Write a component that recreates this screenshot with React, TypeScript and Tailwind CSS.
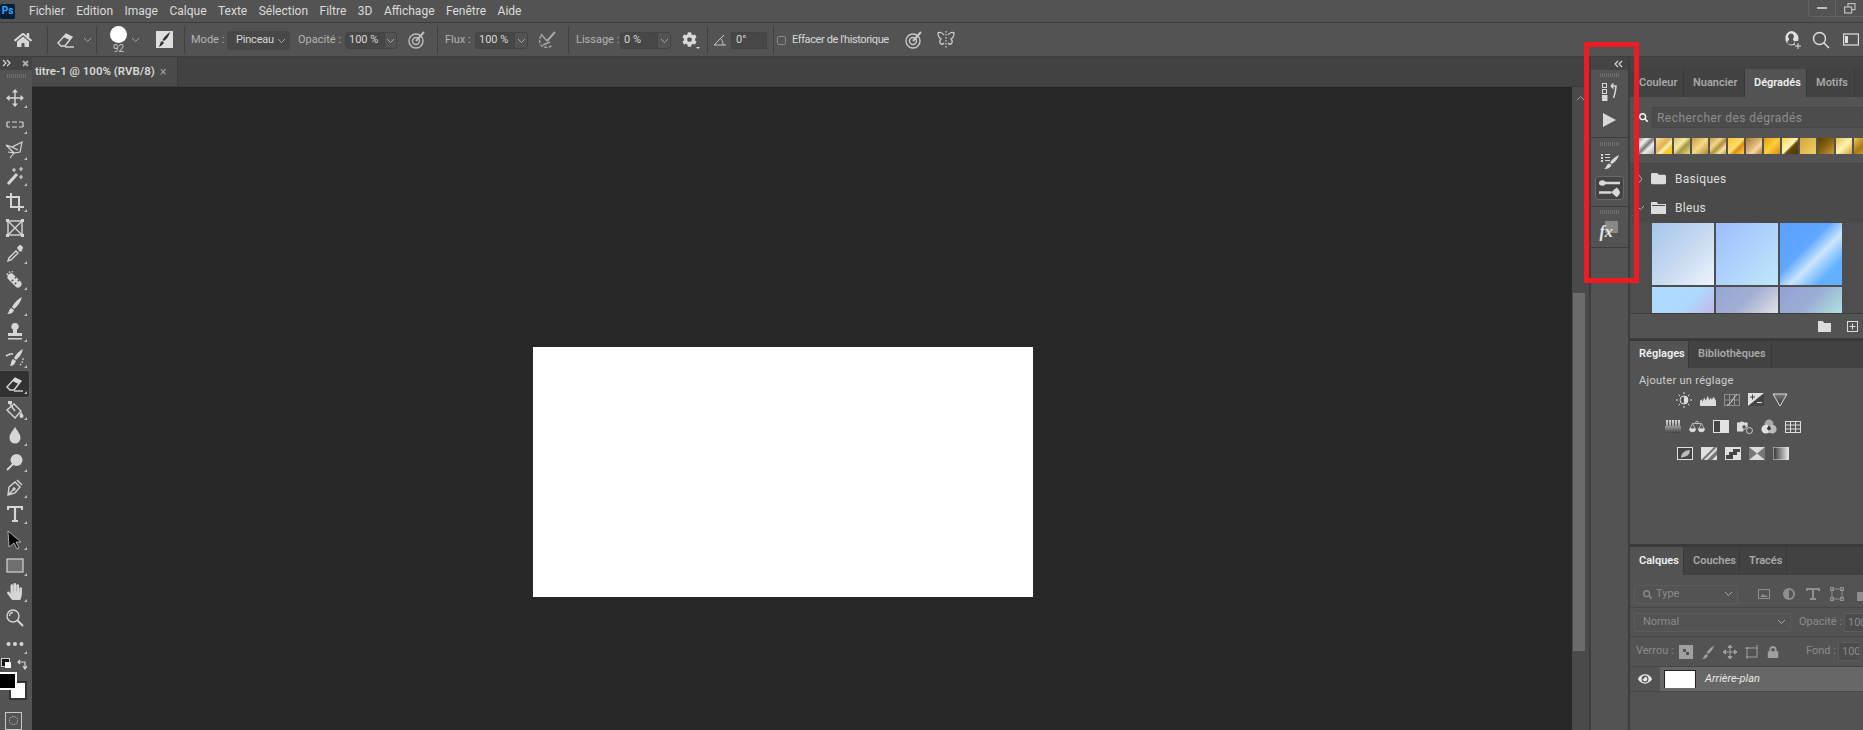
import type { ReactNode } from 'react';
import { FaCog, FaEye, FaFolder, FaHandPaper, FaHome, FaLock, FaSearch } from 'react-icons/fa';

const menus = ['Fichier', 'Edition', 'Image', 'Calque', 'Texte', 'Sélection', 'Filtre', '3D', 'Affichage', 'Fenêtre', 'Aide'];

const Svg = ({ size = 20, box = 20, children }: { size?: number; box?: number; children: ReactNode }) => (
  <svg width={size} height={size} viewBox={`0 0 ${box} ${box}`} fill="none" stroke="currentColor" strokeWidth={1.4}>
    {children}
  </svg>
);

const F = 'currentColor';

const tools: { name: string; icon: ReactNode; corner?: boolean; active?: boolean }[] = [
  { name: 'move', corner: true, icon: <Svg><path d="M10 3v14M3 10h14" /><path fill={F} stroke="none" d="M10 1l3 3.500H7zM10 19l-3-3.500h6zM1 10l3.500-3v6zM19 10l-3.500 3v-6z" /></Svg> },
  { name: 'marquee', corner: true, icon: <Svg><path strokeWidth={1.200} d="M2 8h3M7 8h5M14 8h4M2 13h3M7 13h5M14 13h4M2 8v5M18 8v5" /></Svg> },
  { name: 'lasso', corner: true, icon: <Svg><path strokeWidth={1.200} d="M1 5l6 2 10-5-2 10-6 1zM7 7l6 3M9 13l-4 5M9 13l-6-1" /></Svg> },
  { name: 'wand', corner: true, icon: <Svg><path strokeWidth={3} d="M3 18L12 8" /><path strokeWidth={1.200} d="M9 2v4M7 4h4M16 1v4M14 3h4M16 9v4M14 11h4" /></Svg> },
  { name: 'crop', corner: true, icon: <Svg><path strokeWidth={2} d="M6 1v14h13M1 5h13v14" /></Svg> },
  { name: 'frame', icon: <Svg><rect x="3" y="3" width="14" height="14" /><path d="M3 3l14 14M17 3L3 17" /><path fill={F} stroke="none" d="M1 1h3v3H1zM16 1h3v3h-3zM1 16h3v3H1zM16 16h3v3h-3z" /></Svg> },
  { name: 'dropper', corner: true, icon: <Svg><path d="M3 17l1-3 7-7 2 2-7 7zM13 3l4 4" /><path fill={F} stroke="none" d="M12 4l2-2.500c1-.8 2-.5 3 .5s1.300 2 .5 3L15 8z" /></Svg> },
  { name: 'heal', corner: true, icon: <Svg><path fill={F} stroke="none" d="M8 4l8 8c1 1 1 3-.5 4.500S12 18 11 17l-8-8C2 8 2 6 3.500 4.500S7 3 8 4z" /><path stroke="#535353" strokeWidth={2} d="M7 10l1 1M10 7l1 1M10 13l1 1M13 10l1 1" /><path strokeDasharray="1.500 1.500" d="M2 5c1-3 4-4 6-3" /></Svg> },
  { name: 'brush', corner: true, icon: <Svg><path fill={F} stroke="none" d="M17 1c-1 4-4 9-8 12l-2-2c2-4 6-8 10-10zM6 12l3 2c-1 3-3 4-7 4 2-1 2-5 4-6z" /></Svg> },
  { name: 'stamp', corner: true, icon: <Svg><path fill={F} stroke="none" d="M10 1a3.500 3.500 0 0 1 2 6.500V11h5v3H3v-3h5V7.500A3.500 3.500 0 0 1 10 1zM3 16h14v1.500H3z" /></Svg> },
  { name: 'history', corner: true, icon: <Svg><path fill={F} stroke="none" d="M18 1c-1 4-3 8-7 11l-2-2c2-4 5-7 9-9zM8 11l3 2c-1 3-3 5-6 5 1-1 1-6 3-7z" /><path d="M1 8l4-2h3" /><path strokeDasharray="1.500 1.500" d="M15 17c2-2 3-4 3-7" /></Svg> },
  { name: 'eraser', corner: true, active: true, icon: <Svg><path d="M2 13l8-9 6 3-7 9H5z" /><path fill={F} stroke="none" d="M7.500 7l2.500-3 6 3-2.500 3z" /><path d="M9 17h9" /></Svg> },
  { name: 'bucket', corner: true, icon: <Svg><path d="M2 10l7-6 7 7-6 7zM5 4l5 7" /><path fill={F} stroke="none" d="M16 12c1.500 2 2.500 3 2.500 4a2 2 0 0 1-4 0c0-1 .5-2 1.500-4zM3 1h4v3H3z" /></Svg> },
  { name: 'blur', corner: true, icon: <Svg><path fill={F} stroke="none" d="M10 1c3 5 5.500 7 5.500 11a5.500 5.500 0 0 1-11 0c0-4 2.500-6 5.500-11z" /></Svg> },
  { name: 'dodge', corner: true, icon: <Svg><circle cx="11.500" cy="8" r="6" fill={F} stroke="none" /><path strokeWidth={1.800} d="M8 12l-6 6" /></Svg> },
  { name: 'pen', corner: true, icon: <Svg><path d="M3 17l1-8 6-5 5 5-5 6zM3 17l5-5M12 2l5 5" /><circle cx="9" cy="11" r="1" /></Svg> },
  { name: 'type', corner: true, icon: <Svg><path strokeWidth={2.200} d="M10 3v14M7 17h6" /><path strokeWidth={2} d="M3 6V3h14v3" /></Svg> },
  { name: 'path', corner: true, icon: <svg width="20" height="20" viewBox="0 0 20 20" fill="#000" stroke="#ccc" strokeWidth={0.8}><path d="M3 1l13 11h-5l3 6-2 1-3-6-5 4z" /></svg> },
  { name: 'rect', corner: true, icon: <svg width="20" height="20" viewBox="0 0 20 20"><rect x="2" y="3" width="16" height="13" fill="#6f6f6f" stroke="#d4d4d4" strokeWidth={1.200} /></svg> },
  { name: 'hand', corner: true, icon: <FaHandPaper size={17} /> },
  { name: 'zoom', icon: <Svg><circle cx="8" cy="8" r="6" /><path d="M4.500 8a3.500 3.500 0 0 1 3.500-3.500" /><path strokeWidth={2} d="M12.500 12.500L18 18" /></Svg> },
  { name: 'more', corner: true, icon: <Svg><circle cx="3.500" cy="10" r="2" fill={F} stroke="none" /><circle cx="10" cy="10" r="2" fill={F} stroke="none" /><circle cx="16.500" cy="10" r="2" fill={F} stroke="none" /></Svg> },
];

const Sep = () => <div className="h-[28px] w-px shrink-0 bg-[#414141]" />;

const Chevron = ({ className = '' }: { className?: string }) => (
  <svg width="9" height="6" viewBox="0 0 9 6" fill="none" stroke="#b0b0b0" strokeWidth={0.9} className={className}>
    <path d="M1 1l3.500 3.500L8 1" />
  </svg>
);

const DoubleArrow = ({ left }: { left?: boolean }) => (
  <svg width="9" height="8" viewBox="0 0 9 8" fill="none" stroke="#d8d8d8" strokeWidth={1.200}>
    <path d={left ? 'M4 1L1 4l3 3M8 1L5 4l3 3' : 'M1 1l3 3-3 3M5 1l3 3-3 3'} />
  </svg>
);

const Label = ({ w, ml, children }: { w: number; ml: string; children: ReactNode }) => (
  <span style={{ width: w }} className={`${ml} mt-[2px] shrink-0 whitespace-nowrap text-[11px] text-[#b4b4b4]`}>
    {children}
  </span>
);

const NumberBox = ({ value, w, arrowAt, ml }: { value: string; w: string; arrowAt: string; ml: string }) => (
  <div className={`${ml} ${w} flex h-[17px] shrink-0 rounded-[3px] border border-[#444] text-[11px] text-[#d8d8d8]`}>
    <span className={`${arrowAt} flex items-center bg-[#474747] pl-[3px]`}>{value}</span>
    <span className="flex flex-1 items-center justify-center border-l border-[#444]">
      <Chevron />
    </span>
  </div>
);

const Target = () => (
  <Svg>
    <circle cx="9" cy="11" r="7" />
    <circle cx="9" cy="11" r="3.500" />
    <path strokeWidth={2} d="M9 11l8-9" />
  </Svg>
);

const OptionsBar = () => (
  <div className="flex h-[33px] shrink-0 items-center bg-[#535353] text-[#d8d8d8]">
    <div className="flex w-[47px] justify-center pr-[2px]">
      <FaHome size={18} />
    </div>
    <Sep />
    <div className="flex w-[48px] items-center pl-[8px]">
      <Svg size={20}>
        <path d="M2 13l8-9 6 3-7 9H5z" />
        <path fill={F} stroke="none" d="M7.500 7l2.500-3 6 3-2.500 3z" />
        <path d="M9 17h9" />
      </Svg>
      <Chevron className="ml-[7px]" />
    </div>
    <Sep />
    <div className="flex w-[59px] items-start pl-[13px]">
      <div className="flex w-[17px] flex-col items-center">
        <div className="mt-[1px] size-[17px] rounded-full bg-white blur-[0.5px]" />
        <span className="text-[10px] leading-[11px] text-[#c8c8c8]">92</span>
      </div>
      <Chevron className="mt-[12px] ml-[4px]" />
    </div>
    <div className="flex h-[17px] w-[17px] shrink-0 items-center justify-center bg-[#dedede] text-[#333]">
      <svg width="13" height="15" viewBox="0 0 13 15" fill="currentColor"><path d="M12 0c-1 4-3 7-6 9L4.500 8C6 5 9 2 12 0zM4 9l2 1.500C5 13 3 14 1 15c1-2 1-5 3-6z" /></svg>
    </div>
    <div className="ml-[11px]">
      <Sep />
    </div>
    <Label w={29} ml="ml-[6px]">Mode :</Label>
    <div className="mt-[2px] ml-[7px] flex h-[19px] w-[63px] shrink-0 items-center justify-between rounded-[3px] border border-[#484848] bg-[#474747] pr-[3px] pl-[8px] text-[11px] tracking-[-0.2px] text-[#d8d8d8]">
      Pinceau
      <Chevron />
    </div>
    <Label w={40} ml="ml-[8px]">Opacité :</Label>
    <NumberBox value="100 %" w="w-[52px]" arrowAt="w-[38px]" ml="ml-[7px] mt-[2px]" />
    <div className="flex w-[40px] justify-center text-[#bdbdbd]">
      <Target />
    </div>
    <Sep />
    <Label w={24} ml="ml-[7px]">Flux :</Label>
    <NumberBox value="100 %" w="w-[53px]" arrowAt="w-[38px]" ml="ml-[6px] mt-[2px]" />
    <div className="flex w-[40px] justify-center text-[#a8a8a8]">
      <Svg>
        <path strokeDasharray="3 1.500" d="M3 6c-2 3-2 8 1 10s8 2 10-1" />
        <path d="M3 4l6 7M5 15l7-3" />
        <path strokeWidth={2} d="M9 11l8-9" />
      </Svg>
    </div>
    <Sep />
    <Label w={39} ml="ml-[7px]">Lissage :</Label>
    <NumberBox value="0 %" w="w-[51px]" arrowAt="w-[36px]" ml="ml-[5px] mt-[2px]" />
    <div className="relative flex w-[36px] justify-center">
      <FaCog size={15} />
      <div className="absolute right-[7px] bottom-[-2px] h-0 w-0 border-x-[2px] border-t-[2px] border-x-transparent border-t-[#e0e0e0]" />
    </div>
    <Sep />
    <div className="flex w-[23px] justify-center text-[#c8c8c8]">
      <svg width="14" height="12" viewBox="0 0 14 12" fill="none" stroke="currentColor" strokeWidth={1}><path d="M13 11H1L11 1M8 5c1.500 1.500 2 3.500 2 6" /></svg>
    </div>
    <div className="mt-[2px] flex h-[17px] w-[36px] shrink-0 items-center border border-[#444] bg-[#474747] pl-[4px] text-[11px] text-[#d8d8d8]">0°</div>
    <div className="ml-[6px]">
      <Sep />
    </div>
    <div className="mt-[2px] ml-[3px] size-[9px] shrink-0 rounded-[2px] border border-[#8a8a8a]" />
    <span className="mt-[2px] ml-[6px] w-[96px] shrink-0 text-[11px] tracking-[-0.4px] whitespace-nowrap text-[#d8d8d8]">Effacer de l'historique</span>
    <div className="ml-[14px] flex w-[24px] justify-center text-[#c8c8c8]">
      <Target />
    </div>
    <div className="ml-[8px] flex w-[24px] justify-center text-[#d0d0d0]">
      <svg width="18" height="20" viewBox="0 0 18 20" fill="none" stroke="currentColor" strokeWidth={1.200}>
        <path d="M9 1v18" strokeDasharray="1.500 1.500" />
        <path d="M7 5C5 2 2 2 1 3c0 3 1 5 3 6-1 1-2 3 0 5 1 1 2 0 3-1M11 5c2-3 5-3 6-2 0 3-1 5-3 6 1 1 2 3 0 5-1 1-2 0-3-1" />
      </svg>
    </div>
    <div className="ml-auto flex items-center gap-[13px] pr-[4px] text-[#e0e0e0]">
      <svg className="mr-[-5px]" width="22" height="20" viewBox="0 0 22 20" fill="currentColor">
        <path d="M9 1a7.500 7.500 0 0 1 7.500 7.500c0 1-.2 1.800-.5 2.500h-3v4h-1.500c-.8.300-1.600.5-2.500.5A7.500 7.500 0 0 1 9 1z" />
        <path fill="#535353" d="M9 3.500a3 3 0 0 1 2 5.200V10l1.500 1v2.500a7 7 0 0 1-7 0V11L7 10V8.700a3 3 0 0 1 2-5.200z" />
        <path stroke="currentColor" fill="none" d="M16 13v6M13 16h6" />
      </svg>
      <svg width="18" height="18" viewBox="0 0 18 18" fill="none" stroke="currentColor" strokeWidth={1.400}>
        <circle cx="7.500" cy="7.500" r="6" />
        <path d="M12 12l5 5" />
      </svg>
      <svg width="16" height="14" viewBox="0 0 16 14" fill="none" stroke="currentColor" strokeWidth={1.200}>
        <rect x="0.600" y="1" width="14.800" height="11" />
        <rect x="2" y="3" width="3" height="7" fill="currentColor" stroke="none" />
      </svg>
    </div>
  </div>
);

const Grip = ({ className = '' }: { className?: string }) => (
  <div className={`h-[4px] w-[19px] bg-[repeating-linear-gradient(90deg,#6f6f6f_0,#6f6f6f_1px,transparent_1px,transparent_2px)] ${className}`} />
);

const Toolbar = () => (
  <div className="flex w-[32px] shrink-0 flex-col bg-[#535353] text-[#d6d6d6]">
    <div className="flex h-[13px] items-center justify-between bg-[#444] pr-[3px] pl-[2px]">
      <DoubleArrow />
      <svg width="7" height="7" viewBox="0 0 7 7" stroke="#b0b0b0" strokeWidth={1.800}><path d="M1 1l5 5M6 1L1 6" /></svg>
    </div>
    <Grip className="mx-auto mt-[4px] mb-[7px] shrink-0" />
    {tools.map((t) => (
      <div key={t.name} className={`relative flex h-[26px] w-[29px] shrink-0 items-center justify-center rounded-r-[2px] ${t.active ? 'bg-[#323232] shadow-[0_0_0_1px_#5e5e5e]' : ''}`}>
        {t.icon}
        {t.corner && <div className="absolute right-[2px] bottom-[3px] h-0 w-0 border-b-[3px] border-l-[3px] border-b-[#c0c0c0] border-l-transparent" />}
      </div>
    ))}
    <div className="relative mt-[1px] h-[74px] w-full">
      <div className="flex h-[10px] items-start pl-[1px]">
        <div className="relative size-[9px] border border-[#ccc] bg-[#111]">
          <div className="absolute top-[3px] left-[3px] size-[6px] bg-white" />
        </div>
        <svg className="ml-[7px]" width="12" height="12" viewBox="0 0 12 12" fill="none" stroke="#d8d8d8" strokeWidth={1.200}><path d="M1 4h7v6M3 2L1 4l2 2M6 8l2 3 2-3" /></svg>
      </div>
      <div className="absolute top-[23px] left-[9px] h-[19px] w-[18px] border-2 border-[#333] bg-white" />
      <div className="absolute top-[14px] left-0 h-[18px] w-[17px] border-y-2 border-r-2 border-white bg-black" />
      <div className="absolute top-[54px] left-[5px] h-[18px] w-[17px] border border-[#c8c8c8]">
        <div className="mx-auto mt-[3px] size-[9px] rounded-full border border-dotted border-[#c8c8c8]" />
      </div>
    </div>
  </div>
);

const DocTabs = () => (
  <div className="flex h-[29px] shrink-0 bg-[#424242]">
    <div className="flex w-[146px] items-center border-r border-[#3b3b3b] bg-[#4b4b4b] pl-[3px] text-[11.5px] font-semibold whitespace-nowrap text-[#d8d8d8]">
      <span className="w-[125px]">titre-1 @ 100% (RVB/8)</span>
      <span className="text-[12px] font-normal text-[#a0a0a0]">×</span>
    </div>
  </div>
);

const Dock = () => (
  <div className="flex w-[41px] shrink-0 flex-col border-x-2 border-x-[#3d3d3d] bg-[#535353] text-[#d8d8d8]">
    <div className="flex h-[13px] items-center justify-end bg-[#444] pr-[5px]">
      <DoubleArrow left />
    </div>
    <div className="flex h-[68px] flex-col items-center border-b border-[#3d3d3d] pt-[3px]">
      <Grip />
      <svg className="mt-[6px]" width="16" height="18" viewBox="0 0 16 18" fill="none" stroke="currentColor"><rect x="0.500" y="0.500" width="4" height="4" /><rect x="0.500" y="6.500" width="4" height="4" /><rect x="0" y="12.500" width="5" height="5" fill="currentColor" /><path strokeWidth={1.500} d="M10 3h4c-.5 5-.5 7-2.500 12M9 3l2.500-2.500M9 3l2.500 2.500" /></svg>
      <svg className="mt-[11px]" width="15" height="16" viewBox="0 0 15 16" fill="currentColor"><path d="M1 1l13 7-13 7z" /></svg>
    </div>
    <div className="flex h-[69px] flex-col items-center border-b border-[#3d3d3d] pt-[4px]">
      <Grip />
      <svg className="mt-[7px]" width="20" height="17" viewBox="0 0 20 17" fill="currentColor"><path d="M1 1h2v2H1zM5 1h5v1H5zM1 4h2v2H1zM5 4h5v1H5zM1 7h2v2H1zM5 7h5v1H5zM19 2c-1 4-4 7-7 9l-2-1.500c2-3 5-6 9-7.500zM9 10.500l2.500 1.500c-1 2.500-3 4-7.500 4 2.500-1 2.500-5 5-5.500z" /></svg>
      <div className="mt-[6px] flex h-[24px] w-[29px] items-center justify-center rounded-[3px] border border-[#6a6a6a] bg-[#444]">
        <svg width="21" height="17" viewBox="0 0 19 15" fill="currentColor"><path d="M3 1.500h16v2.200H3zM0 2.500a3 2.500 0 1 1 6 0 3 2.500 0 0 1-6 0zM0 10h11v2.200H0zM11 11l5-4.500c2 2 3 3.500 3 4.500s-1 2.500-3 4.500z" /></svg>
      </div>
    </div>
    <div className="flex h-[41px] flex-col items-center border-b border-[#3d3d3d] pt-[3px]">
      <Grip />
      <div className="relative mt-[7px] h-[18px] w-[16px]">
        <div className="absolute top-0 right-0 h-[12px] w-[13px] bg-[#888]" />
        <span className="absolute bottom-[-1px] left-[-2px] font-['Liberation_Serif',serif] text-[16px] leading-none font-bold text-[#e8e8e8] italic">fx</span>
      </div>
    </div>
  </div>
);

const PanelTab = ({ w, active, children }: { w: string; active?: boolean; children: ReactNode }) => (
  <div className={`${w} flex shrink-0 items-center border-r border-[#3a3a3a] pl-[9px] text-[11px] font-semibold whitespace-nowrap ${active ? 'bg-[#535353] text-[#f0f0f0]' : 'text-[#a8a8a8]'}`}>
    {children}
  </div>
);

const PanelTabs = ({ h, children }: { h: string; children: ReactNode }) => <div className={`${h} flex shrink-0 bg-[#424242]`}>{children}</div>;

const swatches = [
  'bg-[linear-gradient(135deg,#8a8a8a_0%,#f2f2f2_30%,#777_50%,#eee_65%,#aaa_100%)]',
  'bg-[linear-gradient(135deg,#f9e29b_0%,#e2b250_45%,#fff0be_60%,#ffc629_75%)]',
  'bg-[linear-gradient(135deg,#dcc66a_0%,#f4e9a4_40%,#a89340_60%,#e8dc8c_100%)]',
  'bg-[linear-gradient(135deg,#c89b3e_0%,#f6d989_50%,#b58630_100%)]',
  'bg-[linear-gradient(135deg,#c8a247_0%,#f0d78a_35%,#b48d3a_55%,#f5e2a0_75%,#c8a045_100%)]',
  'bg-[linear-gradient(135deg,#ffc42c_0%,#ffdd6e_50%,#d78f12_65%,#ffd050_100%)]',
  'bg-[linear-gradient(135deg,#aa7a36_0%,#e0b878_50%,#f8d8a0_65%,#b08038_100%)]',
  'bg-[linear-gradient(135deg,#e89d0c_0%,#ffce3c_50%,#d88d10_100%)]',
  'bg-[linear-gradient(135deg,#ffd74a_0%,#fff4b8_50%,#6b4a08_60%,#4a3200_100%)]',
  'bg-[linear-gradient(135deg,#d4a63a_0%,#f2d066_100%)]',
  'bg-[linear-gradient(135deg,#5a3d00_0%,#8a6410_50%,#c49a3a_100%)]',
  'bg-[linear-gradient(135deg,#e8c050_0%,#fff4b0_50%,#d0a030_100%)]',
  'bg-[linear-gradient(135deg,#f0c850_0%,#a87818_50%,#e0b040_100%)]',
];

const blues = [
  'h-[62px] bg-[linear-gradient(135deg,#a5c6ec_0%,#c5d9ef_50%,#edf4ff_100%)]',
  'h-[62px] bg-[linear-gradient(135deg,#9dbdff_0%,#c0e8fb_100%)]',
  'h-[62px] bg-[linear-gradient(135deg,#5aa2ff_0%,#5ea6ff_40%,#cbe6ff_58%,#62b0ff_80%)]',
  'h-[26px] bg-[linear-gradient(135deg,#acdcff_0%,#b0d8fc_60%,#c0b8ea_100%)]',
  'h-[26px] bg-[linear-gradient(135deg,#94a6d2_0%,#a2afd4_50%,#e0e2e4_100%)]',
  'h-[26px] bg-[linear-gradient(135deg,#92a2d4_0%,#9aaed4_50%,#aee2e0_100%)]',
];

const FolderRow = ({ open, label }: { open?: boolean; label: string }) => (
  <div className="flex h-[29px] items-center pl-[7px] text-[12px] tracking-[0.3px] text-[#dedede]">
    <svg width="7" height="10" viewBox="0 0 7 10" fill="none" stroke="#b8b8b8" strokeWidth={0.9}>
      {open ? <path d="M0 3l3.500 3.500L7 3" /> : <path d="M1 0l4 5-4 5" />}
    </svg>
    <div className="ml-[7px] text-[#dcdcdc]">
      {open ? (
        <svg width="15" height="12" viewBox="0 0 15 12" fill="currentColor"><path d="M0 0h6l1 2h8v10H0zM1 3v1h13V3z" fillRule="evenodd" /></svg>
      ) : (
        <FaFolder size={15} />
      )}
    </div>
    <span className="ml-[9px]">{label}</span>
  </div>
);

const GradientsPanel = () => (
  <div className="flex h-[241px] shrink-0 flex-col bg-[#535353]">
    <div className="flex h-[41px] shrink-0 items-start overflow-hidden pt-[10px]">
      <FaSearch size={9} className="mt-[6px] ml-[9px] shrink-0 text-white" />
      <div className="ml-[4px] flex h-[21px] w-[300px] shrink-0 items-center border border-[#474747] bg-[#4c4c4c] pl-[4px] text-[12px] tracking-[0.45px] text-[#8c8c8c]">Rechercher des dégradés</div>
    </div>
    <div className="flex h-[26px] shrink-0 gap-[2px] overflow-hidden border-b border-[#454545] pl-[8px]">
      {swatches.map((s) => (
        <div key={s} className={`h-[16px] w-[16px] shrink-0 ${s}`} />
      ))}
    </div>
    <div className="h-[59px] shrink-0 bg-[#4a4a4a]">
      <FolderRow label="Basiques" />
      <FolderRow open label="Bleus" />
    </div>
    <div className="grid h-[90px] shrink-0 grid-cols-[62px_62px_62px] content-start gap-[2px] overflow-hidden bg-[#4e4e4e] pl-[22px]">
      {blues.map((b) => (
        <div key={b} className={b} />
      ))}
    </div>
    <div className="flex flex-1 items-center justify-end gap-[16px] border-t border-[#3d3d3d] pr-[5px] text-[#dcdcdc]">
      <svg width="13" height="11" viewBox="0 0 13 11" fill="currentColor"><path d="M0 0h5l1 2h7v9H0z" /></svg>
      <svg width="11" height="11" viewBox="0 0 11 11" fill="none" stroke="currentColor"><rect x="0.500" y="0.500" width="10" height="10" /><path d="M5.500 2.500v6M2.500 5.500h6" /></svg>
    </div>
  </div>
);

const AdjIcon = ({ children }: { children: ReactNode }) => (
  <svg width="16" height="16" viewBox="0 0 16 16" fill="none" stroke="#dcdcdc" strokeWidth={1}>
    {children}
  </svg>
);

const adjRows: { pl: string; icons: ReactNode[] }[] = [
  {
    pl: 'pl-[46px]',
    icons: [
      <AdjIcon key="1"><circle cx="8" cy="8" r="4" /><path fill="#dcdcdc" stroke="none" d="M8 4a4 4 0 0 1 0 8z" /><path d="M8 0v2M8 14v2M0 8h2M14 8h2M2.500 2.500L4 4M12 12l1.500 1.500M13.500 2.500L12 4M4 12l-1.500 1.500" /></AdjIcon>,
      <svg key="2" width="19" height="16" viewBox="0 0 19 16" fill="#dcdcdc"><path d="M0 15V9l2-2 1 3 2-5 2 4 2-6 2 5 2-3 1 3 2-4 3 5v6z" /></svg>,
      <AdjIcon key="3"><rect x="0.500" y="2.500" width="15" height="11" stroke="#8f8f8f" /><path stroke="#8f8f8f" d="M5.500 2.500v11M10.500 2.500v11M0.500 8h15" /><path stroke="#dcdcdc" d="M3 13c4 0 6-8 10-10.500" /></AdjIcon>,
      <svg key="4" width="16" height="14" viewBox="0 0 16 14"><rect width="16" height="13" fill="#e0e0e0" /><path fill="#444" d="M16 0v13H0z" /><path stroke="#444" fill="none" d="M2 4h5M4.500 1.500v5" /><path stroke="#e0e0e0" fill="none" d="M9 9.500h5" /></svg>,
      <svg key="5" width="16" height="14" viewBox="0 0 16 14"><defs><linearGradient id="v" x1="0" x2="0" y1="0" y2="1"><stop offset="0" stopColor="#777" /><stop offset="1" stopColor="#333" /></linearGradient></defs><path d="M1 1h14L8 13z" fill="url(#v)" stroke="#dcdcdc" /></svg>,
    ],
  },
  {
    pl: 'pl-[35px]',
    icons: [
      <svg key="1" width="16" height="13" viewBox="0 0 16 13"><defs><linearGradient id="h" x1="0" x2="0" y1="0" y2="1"><stop offset="0" stopColor="#e0e0e0" /><stop offset="1" stopColor="#444" /></linearGradient></defs><rect width="16" height="13" fill="url(#h)" /><path stroke="#555" strokeDasharray="1 2" strokeWidth={6} d="M0 3h16" /></svg>,
      <svg key="2" width="18" height="14" viewBox="0 0 18 14" fill="#dcdcdc" stroke="#dcdcdc" strokeWidth={0.8}><path fill="none" d="M4 3h10M4 3L1 9M4 3l3 6M14 3l-3 6M14 3l3 6" /><path d="M0.500 9h7a3.500 3.500 0 0 1-7 0zM10.500 9h7a3.500 3.500 0 0 1-7 0z" /><circle cx="9" cy="2" r="1.500" fill="none" /></svg>,
      <svg key="3" width="16" height="13" viewBox="0 0 16 13"><rect width="16" height="13" fill="#e2e2e2" /><rect x="1" y="1" width="6" height="11" fill="#444" /></svg>,
      <svg key="4" width="18" height="16" viewBox="0 0 18 16" fill="#dcdcdc"><path d="M0 3h3l1-1h3l1 1h4v5a5 5 0 0 0-5 5H0z" /><circle cx="8" cy="8" r="2.500" fill="#535353" stroke="#dcdcdc" /><circle cx="14" cy="12" r="3.400" fill="none" stroke="#dcdcdc" /></svg>,
      <svg key="5" width="18" height="17" viewBox="0 0 18 17"><circle cx="9" cy="5.500" r="5" fill="#aaa" /><circle cx="5.500" cy="11.500" r="5" fill="#e0e0e0" /><circle cx="12.500" cy="11.500" r="5" fill="#bbb" /><path d="M9 7l2.500 4-2.500 2-2.500-2z" fill="#333" /></svg>,
      <AdjIcon key="6"><rect x="0.500" y="2.500" width="15" height="11" /><path d="M5.500 2.500v11M10.500 2.500v11M0.500 6h15M0.500 10h15" /></AdjIcon>,
    ],
  },
  {
    pl: 'pl-[47px]',
    icons: [
      <svg key="1" width="16" height="13" viewBox="0 0 16 13"><rect width="16" height="13" fill="#e0e0e0" /><rect x="1" y="1" width="14" height="11" fill="#444" /><path d="M4 11c0-5 4-8 9-8 0 5-4 7-7 7z" fill="#bbb" /></svg>,
      <svg key="2" width="16" height="13" viewBox="0 0 16 13"><rect width="16" height="13" fill="#e0e0e0" /><path d="M0 13L13 0h3L3 13zM6 13L16 3v5l-5 5z" fill="#777" /></svg>,
      <svg key="3" width="16" height="13" viewBox="0 0 16 13"><rect width="16" height="13" fill="#e0e0e0" /><path d="M1 12V8h3V5h4V2h7v3h-3v3H8v4z" fill="#444" /></svg>,
      <svg key="4" width="16" height="13" viewBox="0 0 16 13"><rect width="16" height="13" fill="#dcdcdc" /><path d="M0 0l8 6.500L0 13zM16 0L8 6.500l8 6.500z" fill="#777" /></svg>,
      <svg key="5" width="16" height="13" viewBox="0 0 16 13"><defs><linearGradient id="g" x1="0" x2="1" y1="0" y2="0"><stop offset="0" stopColor="#333" /><stop offset="1" stopColor="#eee" /></linearGradient></defs><rect width="16" height="13" fill="url(#g)" stroke="#dcdcdc" /></svg>,
    ],
  },
];

const AdjustPanel = () => (
  <div className="flex h-[176px] shrink-0 flex-col bg-[#535353] pt-[8px]">
    <span className="pl-[9px] text-[11px] leading-[10px] tracking-[0.3px] text-[#cfcfcf]">Ajouter un réglage</span>
    {adjRows.map((r) => (
      <div key={r.pl} className={`${r.pl} flex h-[27px] items-center gap-[8px]`}>
        {r.icons.map((ic, i) => (
          <div key={i} className="flex w-[16px] justify-center">{ic}</div>
        ))}
      </div>
    ))}
  </div>
);

const LayersPanel = () => (
  <div className="flex flex-1 flex-col bg-[#535353] text-[11px]">
    <div className="flex h-[33px] shrink-0 items-center border-b border-[#474747] pt-[6px] pl-[4px] text-[#8b8b8b]">
      <div className="flex h-[19px] w-[104px] shrink-0 items-center justify-between rounded-[2px] border border-[#5c5c5c] pr-[4px] pl-[8px]">
        <span className="flex items-center gap-[4px]"><FaSearch size={9} />Type</span>
        <Chevron />
      </div>
      <div className="ml-[20px] flex items-center gap-[10px] text-[#8f8f8f]">
        <svg width="14" height="11" viewBox="0 0 14 11" fill="none" stroke="currentColor"><rect x="0.500" y="0.500" width="11" height="9" /><path fill="currentColor" stroke="none" d="M2 8l3-3 2 2 1-1 2 2z" /></svg>
        <svg width="14" height="14" viewBox="0 0 14 14"><circle cx="7" cy="7" r="6" fill="#8f8f8f" /><path d="M7 3a4 4 0 0 1 0 8z" fill="#555" /></svg>
        <svg width="14" height="12" viewBox="0 0 14 12" fill="none" stroke="currentColor" strokeWidth={2}><path d="M7 1v10M4 11h6M1 3V1h12v2" /></svg>
        <svg width="14" height="14" viewBox="0 0 14 14" fill="none" stroke="currentColor"><rect x="2" y="2" width="10" height="10" /><rect x="0.500" y="0.500" width="3" height="3" /><rect x="10.500" y="0.500" width="3" height="3" /><rect x="0.500" y="10.500" width="3" height="3" /><rect x="10.500" y="10.500" width="3" height="3" /></svg>
        <svg width="14" height="14" viewBox="0 0 14 14" fill="currentColor"><path d="M3 5h11v9H3z" /></svg>
      </div>
    </div>
    <div className="flex h-[29px] shrink-0 items-center border-b border-[#474747] pl-[4px] text-[#8b8b8b]">
      <div className="flex h-[19px] w-[157px] shrink-0 items-center justify-between rounded-[2px] border border-[#5c5c5c] pr-[4px] pl-[8px]">
        Normal
        <Chevron />
      </div>
      <span className="ml-[8px] w-[40px] shrink-0 whitespace-nowrap">Opacité :</span>
      <div className="ml-[5px] h-[19px] w-[24px] shrink-0 overflow-hidden border-y border-l border-[#5c5c5c] bg-[#4c4c4c] pl-[3px] leading-[17px]">100</div>
    </div>
    <div className="flex h-[29px] shrink-0 items-center pl-[6px] text-[#8b8b8b]">
      <span className="w-[41px] shrink-0">Verrou :</span>
      <div className="ml-[2px] flex items-center gap-[8px] text-[#a0a0a0]">
        <svg width="14" height="14" viewBox="0 0 14 14" fill="currentColor"><path d="M0 0h14v14H0zM4 4v3h3V4zm3 3v3h3V7z" fillRule="evenodd" /></svg>
        <svg width="14" height="14" viewBox="0 0 14 14" fill="currentColor"><path d="M13 1c-1 3-3 6-6 8L5.500 8C7 5 10 2 13 1zM5 9l2 1.500C6 13 4 14 1 14c2-1 2-4 4-5z" /></svg>
        <svg width="14" height="14" viewBox="0 0 14 14" fill="none" stroke="currentColor"><path d="M7 1v12M1 7h12" /><path fill="currentColor" d="M7 0l2 2.500H5zM7 14l-2-2.500h4zM0 7l2.500-2v4zM14 7l-2.500 2V5z" /></svg>
        <svg width="14" height="14" viewBox="0 0 14 14" fill="none" stroke="currentColor"><rect x="2" y="3" width="10" height="9" /><path d="M0 3h4M12 0v4M2 11v3" /></svg>
        <FaLock size={12} />
      </div>
      <span className="ml-[27px] w-[27px] shrink-0 whitespace-nowrap">Fond :</span>
      <div className="ml-[5px] h-[19px] w-[21px] shrink-0 overflow-hidden border-y border-l border-[#5c5c5c] bg-[#4c4c4c] pl-[3px] leading-[17px]">100</div>
    </div>
    <div className="flex h-[26px] shrink-0 border-y border-[#474747]">
      <div className="flex w-[30px] items-center justify-center pr-[1px] text-[#e8e8e8]">
        <FaEye size={14} />
      </div>
      <div className="flex flex-1 items-center bg-[#676767] pl-[4px]">
        <div className="h-[18px] w-[32px] border-x border-t border-[#222] bg-white" />
        <span className="ml-[9px] text-[#e8e8e8] italic">Arrière-plan</span>
      </div>
    </div>
  </div>
);

const App = () => {
  return (
    <div className="relative flex h-[730px] w-[1863px] flex-col overflow-hidden bg-[#535353] font-['Roboto',sans-serif]">
      <div className="flex h-[22px] shrink-0 items-center bg-[#535353]">
        <div className="flex h-[15px] w-[15px] items-center justify-center rounded-[2px] bg-[#001e36] text-[10px] leading-none font-bold text-[#31a8ff]">Ps</div>
        <div className="ml-[14px] flex gap-[11.5px] text-[12px] text-[#dcdcdc]">
          {menus.map((m) => (
            <span key={m}>{m}</span>
          ))}
        </div>
        <div className="mr-0 ml-auto flex h-[17px] w-[55px] items-center self-start rounded-bl-[4px] border-b border-l border-[#636363]">
          <div className="flex h-full flex-1 items-center justify-center border-r border-[#636363]">
            <div className="h-[2px] w-[10px] bg-[#bdbdbd]" />
          </div>
          <div className="flex h-full w-[27px] items-center justify-center">
            <svg width="12" height="11" viewBox="0 0 12 11" fill="none" stroke="#bdbdbd" strokeWidth={1.200}><rect x="4" y="0.600" width="7" height="6" /><rect x="0.600" y="4" width="7" height="6" fill="#535353" /></svg>
          </div>
        </div>
      </div>
      <div className="h-px shrink-0 bg-[#3c3c3c]" />
      <OptionsBar />
      <div className="flex min-h-0 flex-1 border-t border-[#3e3e3e]">
        <Toolbar />
        <div className="flex min-w-0 flex-1 flex-col">
          <DocTabs />
          <div className="flex min-h-0 flex-1 border-t border-[#3a3a3a]">
            <div className="flex-1 bg-[#282828] pt-[260px] pl-[501px]">
              <div className="h-[250px] w-[500px] bg-white" />
            </div>
            <div className="flex w-[17px] shrink-0 flex-col items-center bg-[#4a4a4a] pt-[8px]">
              <svg width="9" height="6" viewBox="0 0 9 6" fill="none" stroke="#9a9a9a"><path d="M1 5l3.500-3.500L8 5" /></svg>
              <div className="mt-[192px] mr-[3px] h-[358px] w-[12px] bg-[#6b6b6b]" />
            </div>
          </div>
        </div>
        <Dock />
        <div className="flex w-[233px] shrink-0 flex-col overflow-hidden bg-[#535353]">
          <div className="h-[12px] shrink-0 bg-[#444]" />
          <PanelTabs h="h-[28px]">
            <PanelTab w="w-[54px]">Couleur</PanelTab>
            <PanelTab w="w-[61px]">Nuancier</PanelTab>
            <PanelTab w="w-[62px]" active>Dégradés</PanelTab>
            <PanelTab w="w-[48px]">Motifs</PanelTab>
          </PanelTabs>
          <GradientsPanel />
          <div className="h-[3px] shrink-0 bg-[#3a3a3a]" />
          <PanelTabs h="h-[27px]">
            <PanelTab w="w-[59px]" active>Réglages</PanelTab>
            <PanelTab w="w-[83px]">Bibliothèques</PanelTab>
          </PanelTabs>
          <AdjustPanel />
          <div className="h-[3px] shrink-0 bg-[#3a3a3a]" />
          <PanelTabs h="h-[28px]">
            <PanelTab w="w-[54px]" active>Calques</PanelTab>
            <PanelTab w="w-[56px]">Couches</PanelTab>
            <PanelTab w="w-[47px]">Tracés</PanelTab>
          </PanelTabs>
          <LayersPanel />
        </div>
      </div>
      <div className="absolute top-[42px] left-[1584px] h-[241px] w-[55px] border-[5px] border-[#ed1c24]" />
    </div>
  );
};

export default App;
